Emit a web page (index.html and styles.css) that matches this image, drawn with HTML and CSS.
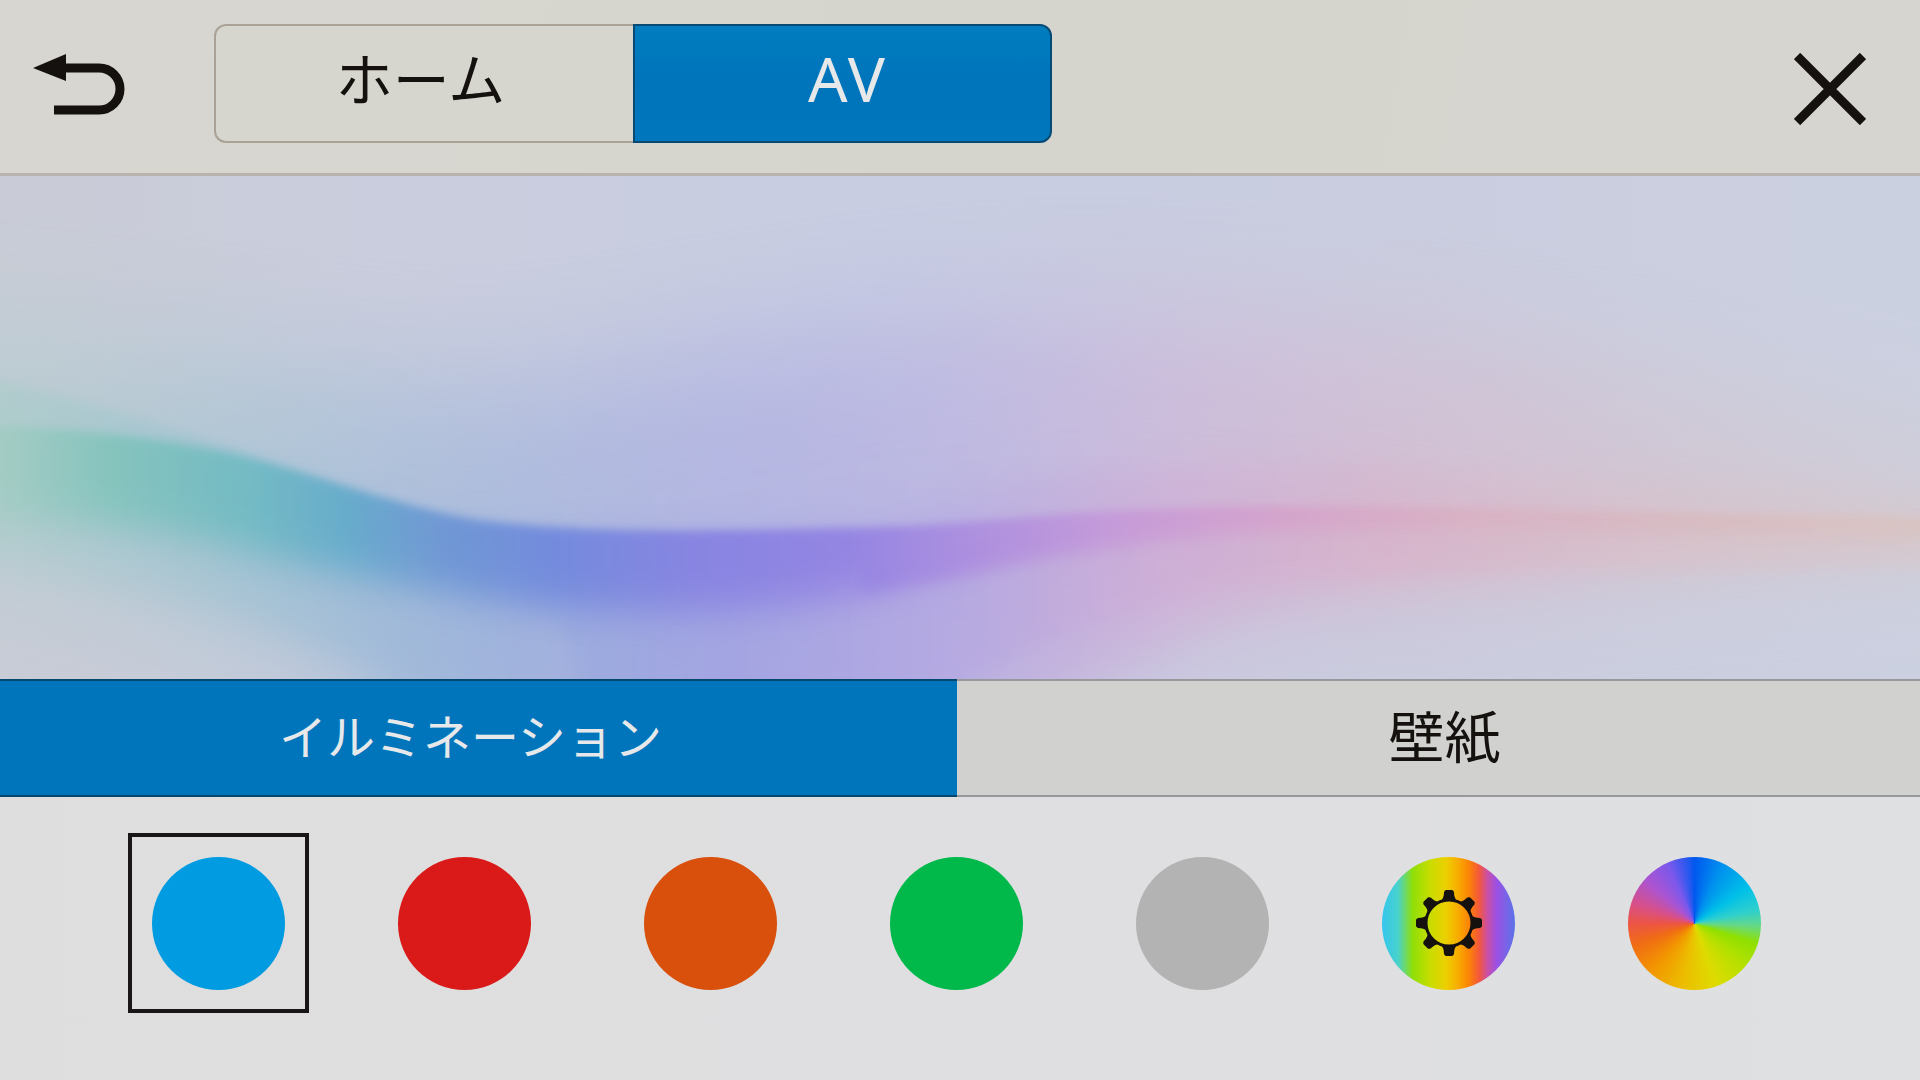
FILE: index.html
```html
<!DOCTYPE html>
<html lang="ja">
<head>
<meta charset="utf-8">
<meta name="viewport" content="width=device-width, initial-scale=1">
<title>AV</title>
<link rel="stylesheet" href="styles.css">
</head>
<body>
<div class="screen">
  <header class="bar">
    <button class="icon-button" type="button" aria-label="戻る">
      <svg width="92" height="64" viewBox="0 0 92 64" aria-hidden="true">
        <path d="M0 15 33 1v27z" fill="#14110f"/>
        <path d="M30 15H66A21 21 0 0 1 66 57H21" fill="none" stroke="#14110f" stroke-width="9"/>
      </svg>
    </button>
    <nav class="segment">
      <button class="segment-item" type="button">ホーム</button>
      <button class="segment-item segment-item-on" type="button">AV</button>
    </nav>
    <button class="icon-button close" type="button" aria-label="閉じる">
      <svg width="72" height="72" viewBox="0 0 72 72" aria-hidden="true">
        <path d="M3 3 69 69M69 3 3 69" fill="none" stroke="#14110f" stroke-width="9"/>
      </svg>
    </button>
  </header>

  <main class="preview">
    <svg class="wave" viewBox="0 0 1920 504" preserveAspectRatio="none" aria-hidden="true">
      <defs>
        <linearGradient id="core" gradientUnits="userSpaceOnUse" x1="0" y1="0" x2="1920" y2="0">
          <stop offset="0" stop-color="#a2ccc3"/>
          <stop offset=".06" stop-color="#80c3bb"/>
          <stop offset=".13" stop-color="#6dbac2"/>
          <stop offset=".18" stop-color="#60aaca"/>
          <stop offset=".23" stop-color="#6a94d4"/>
          <stop offset=".29" stop-color="#6e86dd"/>
          <stop offset=".36" stop-color="#8380e1"/>
          <stop offset=".44" stop-color="#9080e3"/>
          <stop offset=".5" stop-color="#a98ae0"/>
          <stop offset=".58" stop-color="#c598d9"/>
          <stop offset=".67" stop-color="#d5a2cb"/>
          <stop offset=".76" stop-color="#d9b0c3"/>
          <stop offset=".88" stop-color="#d8bac0"/>
          <stop offset="1" stop-color="#dac3c0"/>
        </linearGradient>
        <linearGradient id="halo" gradientUnits="userSpaceOnUse" x1="0" y1="0" x2="1920" y2="0">
          <stop offset="0" stop-color="#a9cdca"/>
          <stop offset=".13" stop-color="#93bfd0"/>
          <stop offset=".25" stop-color="#8daadb"/>
          <stop offset=".38" stop-color="#9c9ce4"/>
          <stop offset=".5" stop-color="#b2a3e2"/>
          <stop offset=".6" stop-color="#cfa9d6"/>
          <stop offset=".72" stop-color="#dab0c8"/>
          <stop offset=".88" stop-color="#dac0c6"/>
          <stop offset="1" stop-color="#d9c6c8"/>
        </linearGradient>
        <filter id="soft4" x="-5%" y="-30%" width="110%" height="160%"><feGaussianBlur stdDeviation="4"/></filter>
        <filter id="soft8" x="-5%" y="-30%" width="110%" height="160%"><feGaussianBlur stdDeviation="8"/></filter>
        <filter id="soft18" x="-10%" y="-30%" width="120%" height="160%"><feGaussianBlur stdDeviation="18"/></filter>
        <filter id="soft60" x="-10%" y="-80%" width="120%" height="260%"><feGaussianBlur stdDeviation="60"/></filter>
        <mask id="core-mask" maskUnits="userSpaceOnUse" x="-100" y="0" width="2200" height="700">
          <path filter="url(#soft18)" fill="#fff" d="M-100 150H1000V360C960 388 920 404 860 416 780 434 640 442 540 430 400 410 300 388 200 362 100 342 0 338 -100 338Z"/>
          <path filter="url(#soft8)" fill="#fff" d="M860 150H2100V362C1700 358 1400 350 1240 358 1120 368 1040 384 960 400 920 408 900 410 860 416Z"/>
        </mask>
      </defs>
      <path filter="url(#soft60)" opacity=".46" fill="url(#halo)" d="M-150 140C100 160 300 200 500 210 800 160 1000 110 1300 150 1600 190 1800 250 2070 300V370C1600 410 1300 420 1180 480 1000 620 700 620 400 560 250 440 0 390 -150 380Z"/>
      <path filter="url(#soft18)" opacity=".46" fill="url(#halo)" d="M-100 218C200 260 300 320 460 350 650 368 850 354 960 325 1100 278 1300 285 1500 300 1700 312 1900 322 2050 325V380C1600 400 1300 410 1180 460 1080 510 980 560 860 580H440C380 470 200 400 -100 380Z"/>
      <path filter="url(#soft4)" opacity=".45" fill="url(#halo)" mask="url(#core-mask)" d="M-50 192C120 232 250 278 330 306 450 352 600 360 800 354 840 352 880 350 900 350V540H-50Z"/>
      <path filter="url(#soft8)" opacity=".4" fill="url(#halo)" d="M560 440C700 430 860 400 980 370 1100 340 1240 332 1500 334 1700 340 1900 342 1990 344V388C1700 394 1400 392 1235 412 1120 436 1030 468 960 508L880 570H600Z"/>
      <path filter="url(#soft4)" opacity=".85" fill="url(#core)" mask="url(#core-mask)" d="M-50 250C60 250 160 262 240 280 330 304 400 332 480 346 600 360 720 356 860 353 1000 348 1080 332 1250 331 1500 331 1700 340 1970 343V600H-50Z"/>
    </svg>
  </main>

  <nav class="tabs">
    <button class="tab tab-on" type="button">イルミネーション</button>
    <button class="tab" type="button">壁紙</button>
  </nav>

  <form class="swatches">
    <label class="swatch"><input type="radio" name="color" aria-label="青" checked><span class="disc blue"></span></label>
    <label class="swatch"><input type="radio" name="color" aria-label="赤"><span class="disc red"></span></label>
    <label class="swatch"><input type="radio" name="color" aria-label="オレンジ"><span class="disc orange"></span></label>
    <label class="swatch"><input type="radio" name="color" aria-label="緑"><span class="disc green"></span></label>
    <label class="swatch"><input type="radio" name="color" aria-label="グレー"><span class="disc gray"></span></label>
    <label class="swatch"><input type="radio" name="color" aria-label="カスタム"><span class="disc custom">
      <svg width="66" height="66" viewBox="-33 -33 66 66" aria-hidden="true">
        <defs><path id="tooth" d="M-8 -22Q-5 -25 -5 -31Q-4 -33 -3 -33H3Q4 -33 5 -31Q5 -25 8 -22Z"/></defs>
        <circle r="23" fill="none" stroke="#14110f" stroke-width="3"/>
        <g fill="#14110f">
          <use href="#tooth"/>
          <use href="#tooth" transform="rotate(45)"/>
          <use href="#tooth" transform="rotate(90)"/>
          <use href="#tooth" transform="rotate(135)"/>
          <use href="#tooth" transform="rotate(180)"/>
          <use href="#tooth" transform="rotate(225)"/>
          <use href="#tooth" transform="rotate(270)"/>
          <use href="#tooth" transform="rotate(315)"/>
        </g>
      </svg>
    </span></label>
    <label class="swatch"><input type="radio" name="color" aria-label="レインボー"><span class="disc rainbow"></span></label>
  </form>
</div>
</body>
</html>
```
FILE: styles.css
```css
* {
  box-sizing: border-box;
}

body {
  margin: 0;
  color: #14110f;
  background: #dfdfe0;
  font-family: "Noto Sans CJK JP", sans-serif;
}

button {
  margin: 0;
  padding: 0;
  border: 0;
  background: none;
  color: inherit;
  font: inherit;
  cursor: pointer;
}

.screen {
  display: grid;
  grid-template-rows: auto 1fr auto auto;
  min-height: 100vh;
}

.bar {
  display: flex;
  align-items: flex-start;
  padding: 24px 54px 30px 33px;
  border-bottom: 3px solid #b9b3ae;
  background: linear-gradient(100deg, #d8d6d0, #d5d5ce 50%, #d6d5cf);
}

.icon-button {
  display: flex;
  padding-top: 29px;
}

.segment {
  display: grid;
  flex: 0 1 838px;
  grid-template-columns: 1fr 1fr;
  margin-left: 89px;
}

.segment-item {
  height: 119px;
  padding: 0 8px 16px 0;
  border: 2px solid #aaa297;
  border-right: 0;
  border-radius: 12px 0 0 12px;
  background: #d6d6cf;
  font-size: 57px;
  line-height: 64px;
}

.segment-item-on {
  padding: 0 0 12px 8px;
  border: 2px solid #044a74;
  border-radius: 0 12px 12px 0;
  background: linear-gradient(#007dbf, #0074bb 50%, #0077bd);
  color: #e6e8ea;
  font-family: "Noto Sans", "Noto Sans CJK JP", sans-serif;
  font-size: 62px;
  font-kerning: none;
}

.close {
  margin-left: auto;
}

.preview {
  position: relative;
  min-height: 200px;
  overflow: hidden;
  background: linear-gradient(90deg, #c9ccd6, #cacddd 20%, #c8cde2 45%, #cacddf 75%, #cbd0e0);
}

.wave {
  position: absolute;
  inset: 0;
  width: 100%;
  height: 100%;
}

.tabs {
  display: grid;
  grid-template-columns: 957fr 963fr;
}

.tab {
  height: 118px;
  padding: 0 0 8px 12px;
  border: solid #96989c;
  border-width: 2px 0;
  background: #d1d2cf;
  font-size: 56px;
  line-height: 64px;
}

.tab-on {
  padding: 0 16px 8px 0;
  border-color: #04476f;
  background: #0075bc;
  color: #e6e8ea;
  font-size: 48px;
}

.swatches {
  display: flex;
  justify-content: space-between;
  padding: 36px 135px 67px 128px;
  background: linear-gradient(90deg, #dedede, #dfdfe1 50%, #dfe0e2);
}

.swatch {
  display: grid;
  place-items: center;
  width: 181px;
  height: 180px;
  border: 4px solid transparent;
  cursor: pointer;
}

.swatch:has(input:checked) {
  border-color: #1a1516;
}

.swatch input {
  grid-area: 1 / 1;
  width: 132px;
  height: 132px;
  margin: 0;
  border-radius: 50%;
  appearance: none;
}

.disc {
  display: grid;
  grid-area: 1 / 1;
  place-items: center;
  width: 133px;
  height: 133px;
  border-radius: 50%;
}

.blue { background: #009be1; }
.red { background: #d91a18; }
.orange { background: #d8500c; }
.green { background: #00b94a; }
.gray { background: #b3b3b3; }

.custom {
  background: linear-gradient(90deg, #34c6ee, #48d2cc 12%, #8fdf08 23%, #c8dd00 36%, #ecd000 48%, #f9a800 58%, #fb8008 66%, #f3583c 73%, #cc50a0 79%, #9c50e4 86%, #5a74e8);
}

.rainbow {
  background: conic-gradient(#0058ee, #008eee 24deg, #00c0e8 56deg, #30d0cc 78deg, #64d888 92deg, #8fe000 108deg, #b4e000 130deg, #dedb00 160deg, #ecbe00 190deg, #f29600 222deg, #f06c14 250deg, #ec5544 270deg, #d85088 288deg, #ac54d0 312deg, #7c58ec 336deg, #2458ee 354deg, #0058ee);
}
```
